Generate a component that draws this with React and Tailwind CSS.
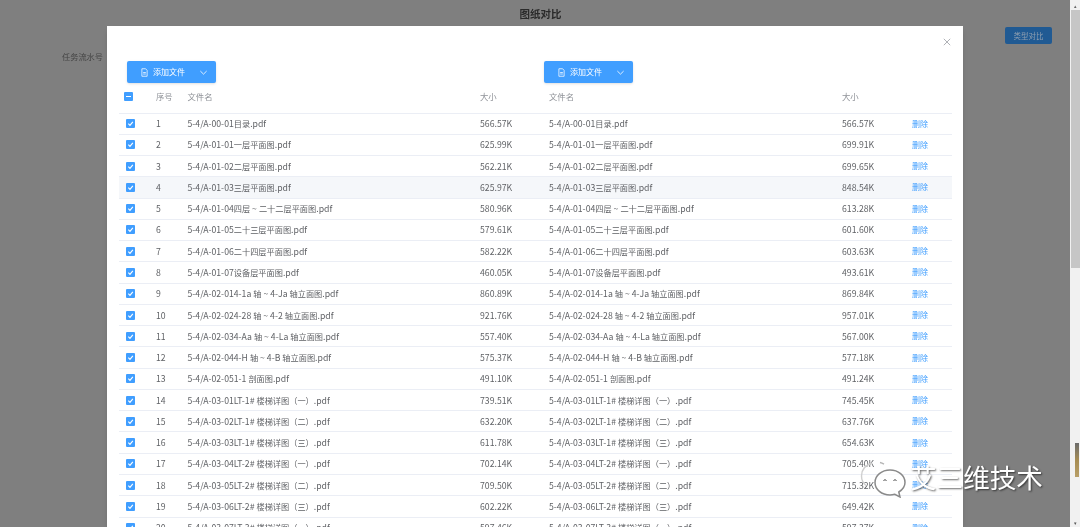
const rows = [
  ["5-4/A-00-01目录.pdf", "566.57K", "566.57K"],
  ["5-4/A-01-01一层平面图.pdf", "625.99K", "699.91K"],
  ["5-4/A-01-02二层平面图.pdf", "562.21K", "699.65K"],
  ["5-4/A-01-03三层平面图.pdf", "625.97K", "848.54K"],
  ["5-4/A-01-04四层 ~ 二十二层平面图.pdf", "580.96K", "613.28K"],
  ["5-4/A-01-05二十三层平面图.pdf", "579.61K", "601.60K"],
  ["5-4/A-01-06二十四层平面图.pdf", "582.22K", "603.63K"],
  ["5-4/A-01-07设备层平面图.pdf", "460.05K", "493.61K"],
  ["5-4/A-02-014-1a 轴 ~ 4-Ja 轴立面图.pdf", "860.89K", "869.84K"],
  ["5-4/A-02-024-28 轴 ~ 4-2 轴立面图.pdf", "921.76K", "957.01K"],
  ["5-4/A-02-034-Aa 轴 ~ 4-La 轴立面图.pdf", "557.40K", "567.00K"],
  ["5-4/A-02-044-H 轴 ~ 4-B 轴立面图.pdf", "575.37K", "577.18K"],
  ["5-4/A-02-051-1 剖面图.pdf", "491.10K", "491.24K"],
  ["5-4/A-03-01LT-1# 楼梯详图（一）.pdf", "739.51K", "745.45K"],
  ["5-4/A-03-02LT-1# 楼梯详图（二）.pdf", "632.20K", "637.76K"],
  ["5-4/A-03-03LT-1# 楼梯详图（三）.pdf", "611.78K", "654.63K"],
  ["5-4/A-03-04LT-2# 楼梯详图（一）.pdf", "702.14K", "705.40K"],
  ["5-4/A-03-05LT-2# 楼梯详图（二）.pdf", "709.50K", "715.32K"],
  ["5-4/A-03-06LT-2# 楼梯详图（三）.pdf", "602.22K", "649.42K"],
  ["5-4/A-03-07LT-3# 楼梯详图（一）.pdf", "597.46K", "597.37K"],
];

const font = { fontFamily: '"Noto Sans CJK SC", "Noto Sans", sans-serif' };

// chinese glyphs sit a bit smaller than the latin ones in the file names
const FileName = ({ name }) => (
  <>
    {name.split(/([\u3000-\u9fff\uff00-\uffef]+)/).map((part, i) =>
      i % 2 ? (
        <span key={i} className="text-[8.2px]">
          {part}
        </span>
      ) : (
        part
      )
    )}
  </>
);

const Check = ({ partial }) => (
  <span className="flex h-[9px] w-[9px] items-center justify-center rounded-[1px] bg-[#409eff]">
    {partial ? (
      <span className="h-px w-[5px] bg-white" />
    ) : (
      <svg viewBox="0 0 10 10" className="h-[9px] w-[9px]" fill="none" stroke="white" strokeWidth="1.3">
        <path d="M2.6 5.2 4.400 7l3.200-3.800" />
      </svg>
    )}
  </span>
);

const AddButton = () => (
  <button className="flex h-[22px] w-[89px] items-center rounded-[2px] bg-[#409eff] pl-[13px] pr-[8px] text-[8px] text-white shadow-sm">
    <svg viewBox="0 0 12 12" className="mr-[4px] h-[9px] w-[9px]" fill="none" stroke="white" strokeWidth="1">
      <path d="M2.500 1h5l2 2.200V11h-7zM4.200 6h3.600M4.200 8h3.600" />
    </svg>
    <span>添加文件</span>
    <svg viewBox="0 0 10 10" className="ml-auto h-[9px] w-[9px]" fill="none" stroke="white" strokeWidth="0.9">
      <path d="M1.500 3.400 5 6.800l3.500-3.400" />
    </svg>
  </button>
);

const WeChat = () => (
  <svg viewBox="0 0 46 38" className="h-[38px] w-[46px] shrink-0" fill="none">
    <path d="M12 3C5.500 5 1.500 10 1.500 16c0 3.500 1.500 7 4.500 9.500" stroke="#cfcfcf" strokeWidth="1.400" />
    <path d="M20 2.500c1.500.3 3 1 4 1.600" stroke="#b5b5b5" strokeWidth="1.400" />
    <path
      d="M30 10C21.700 10 15 15.500 15 22.500S21.700 35 30 35c1.700 0 3.300-.3 4.800-.7L40 37l-1.200-5c3.800-2.300 6.200-5.600 6.200-9.500C45 15.500 38.300 10 30 10z"
      fill="white"
      fillOpacity="0.7"
      stroke="#8a8a8a"
      strokeWidth="1.500"
    />
    <path d="M23.700 21a1.300 1.300 0 0 1 2.600 0M33.700 21a1.300 1.300 0 0 1 2.600 0" stroke="#666" strokeWidth="1" />
  </svg>
);

export default function App() {
  return (
    <div style={font} className="relative flex h-[527px] w-[1080px] overflow-hidden bg-[#7f7f7f] blur-[0.3px]">
      {/* page behind the dialog */}
      <div className="min-w-0 flex-1">
        <h1 className="pl-[11px] pt-[6px] text-center text-[10.5px] font-bold leading-[16px] text-[#2a2a2a]">图纸对比</h1>
        <div className="flex justify-end pr-[18px] pt-[5px]">
          <button className="h-[17px] w-[47px] rounded-[2px] bg-[#205a93] text-[7.5px] text-[#8f9fb0]">类型对比</button>
        </div>
        <p className="pl-[62px] pt-[6px] text-[8.2px] leading-[13px] text-[#454545]">任务流水号</p>
      </div>

      {/* scrollbar */}
      <div className="flex w-[10px] flex-col bg-[#f1f1f1] pl-[1px]">
        <div className="flex h-[10px] shrink-0 items-center justify-center text-[5px] leading-none text-[#666]">▴</div>
        <div className="h-[258px] shrink-0 bg-[#c6c6c6]" />
        <div className="h-[175px] shrink-0" />
        <div className="ml-[4px] h-[34px] w-[4px] shrink-0 bg-gradient-to-b from-[#6b6b6b] via-[#a68c52] to-[#b89f68]" />
        <div className="flex-1" />
        <div className="flex h-[10px] shrink-0 items-center justify-center text-[5px] leading-none text-[#555]">▾</div>
      </div>

      {/* dialog */}
      <div className="absolute left-[107px] top-[26px] h-[501px] w-[856px] bg-white shadow-md">
        <svg viewBox="0 0 10 10" className="absolute right-[12px] top-[12px] h-[8px] w-[8px]" fill="none" stroke="#909399" strokeWidth="0.9">
          <path d="M1 1l8 8M9 1l-8 8" />
        </svg>
        <div className="pl-[12px] pr-[11px] pt-[35px]">
          <div className="flex pl-[8px]">
            <div className="w-[417px]">
              <AddButton />
            </div>
            <AddButton />
          </div>
          <div className="flex h-[29.5px] items-center pb-[2px] text-[8.4px] text-[#909399]">
            <div className="w-[37px] pl-[5px]">
              <Check partial />
            </div>
            <div className="w-[31.5px]">序号</div>
            <div className="w-[292.5px]">文件名</div>
            <div className="w-[69px]">大小</div>
            <div className="w-[293px]">文件名</div>
            <div className="w-[70px]">大小</div>
          </div>
          {rows.map((r, i) => (
            <div
              key={i}
              className={`flex h-[21.28px] items-center border-t border-[#ebeef5] text-[8.7px] text-[#606266] ${i === 3 ? "bg-[#f5f7fa]" : ""}`}
            >
              <div className="w-[37px] pl-[7px]">
                <Check />
              </div>
              <div className="w-[31.5px]">{i + 1}</div>
              <div className="w-[292.5px] whitespace-nowrap">
                <FileName name={r[0]} />
              </div>
              <div className="w-[69px]">{r[1]}</div>
              <div className="w-[293px] whitespace-nowrap">
                <FileName name={r[0]} />
              </div>
              <div className="w-[70px]">{r[2]}</div>
              <div className="text-[8px] text-[#409eff]">删除</div>
            </div>
          ))}
        </div>
      </div>

      {/* watermark */}
      <div className="absolute left-[860px] top-[460px] flex items-start gap-[4px]">
        <WeChat />
        <span className="text-[26.6px] leading-[34px] whitespace-nowrap text-white [text-shadow:1px_1px_2px_rgba(0,0,0,0.6)]">艾三维技术</span>
      </div>
    </div>
  );
}
